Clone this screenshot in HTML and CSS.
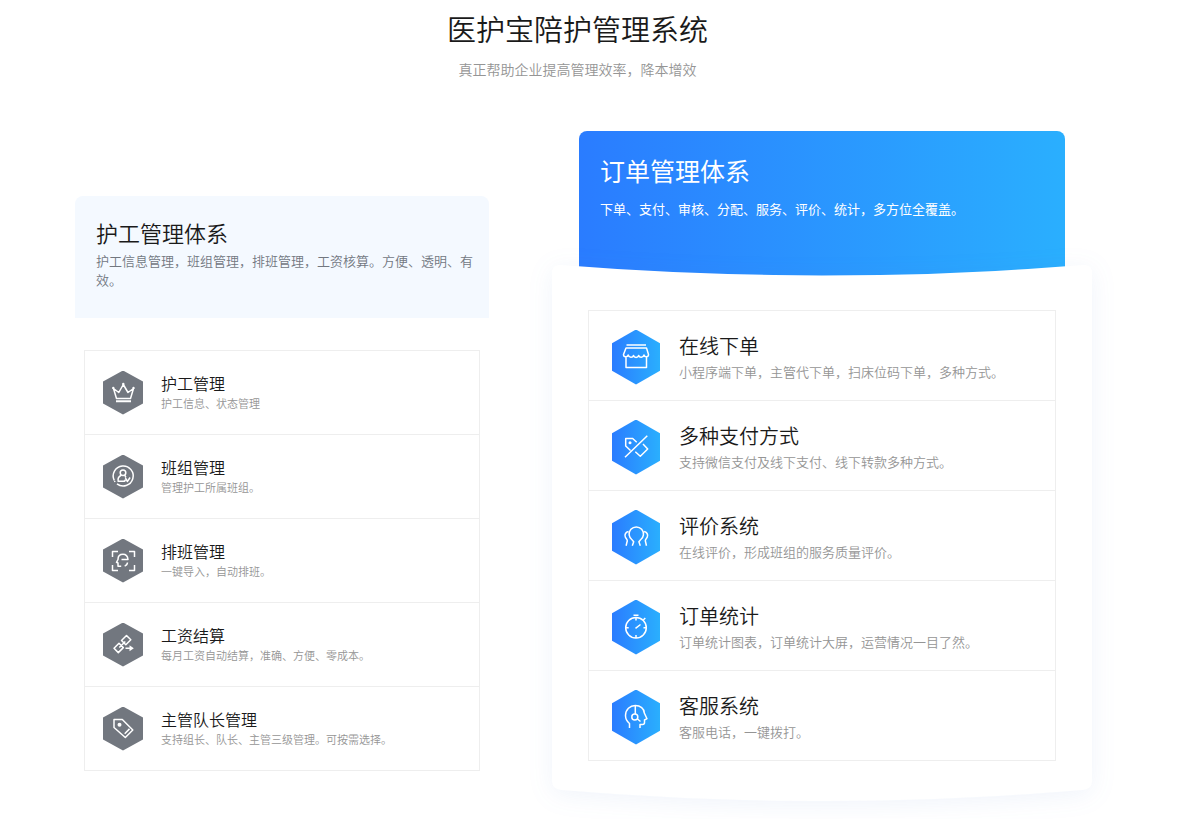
FILE: index.html
```html
<!DOCTYPE html>
<html lang="zh-CN">
<head>
    <meta charset="UTF-8">
    <meta name="viewport" content="width=device-width, initial-scale=1.0">
    <title>医护宝陪护管理系统</title>
    <link rel="stylesheet" href="styles.css">
</head>
<body>
    <main class="section">
        <header class="section-header">
            <h1>医护宝陪护管理系统</h1>
            <p>真正帮助企业提高管理效率，降本增效</p>
        </header>

        <div class="columns">
            <!-- 护工管理体系 -->
            <section class="panel panel-worker">
                <div class="panel-head">
                    <h2>护工管理体系</h2>
                    <p>护工信息管理，班组管理，排班管理，工资核算。方便、透明、有效。</p>
                </div>
                <ul class="feature-list">
                    <li class="feature">
                        <span class="hex">
                            <svg viewBox="0 0 40 44" aria-hidden="true">
                                <path d="M10.5 17.5l3 10h14l3-10-5.5 4-4.700-8-4.500 8z"/>
                                <path class="thick" d="M13 30.200h15"/>
                                <g class="solid"><circle cx="10.300" cy="17" r="1.200"/><circle cx="20.300" cy="13" r="1.200"/><circle cx="30.500" cy="17" r="1.200"/></g>
                            </svg>
                        </span>
                        <div class="feature-text">
                            <h3>护工管理</h3>
                            <p>护工信息、状态管理</p>
                        </div>
                    </li>
                    <li class="feature">
                        <span class="hex">
                            <svg viewBox="0 0 40 44" aria-hidden="true">
                                <path d="M11.300 25.500A10 10 0 1 1 14 28.800M12 27l-.5-1"/>
                                <circle cx="20" cy="17.800" r="2.800"/>
                                <path d="M18.200 20.300c-2.500 1.200-3.500 3.500-3 6h5.300c1 0 1.800-.8 1.800-1.800M21.500 20.300l1.500 1.700M22.300 22.500l2 4 2.800-4"/>
                            </svg>
                        </span>
                        <div class="feature-text">
                            <h3>班组管理</h3>
                            <p>管理护工所属班组。</p>
                        </div>
                    </li>
                    <li class="feature">
                        <span class="hex">
                            <svg viewBox="0 0 40 44" aria-hidden="true">
                                <path d="M9.500 18v-5.500H15M26 12.500h5.500V18M31.500 26v5.500H26M15 31.500H9.500V26"/>
                                <path d="M18.500 20.500h6.500c-.3-3-2.300-5.200-5-5.200-3.300 0-5 2.400-5 5.200l-1.500 2.800 1.500.7v3.300h3.200M24.500 23.500c-.2 1.800-1.200 3-2.800 3.500"/>
                            </svg>
                        </span>
                        <div class="feature-text">
                            <h3>排班管理</h3>
                            <p>一键导入，自动排班。</p>
                        </div>
                    </li>
                    <li class="feature">
                        <span class="hex">
                            <svg viewBox="0 0 40 44" aria-hidden="true">
                                <path d="M18.500 17.500l5-5 4.300 4.300-5 5zM11 25.300l5-5 4.300 4.300-5 5zM16.300 24.500l6-6M22.500 25.300H29"/>
                                <path class="solid" d="M26.500 22.300l4.300 3-4.300 3z"/>
                            </svg>
                        </span>
                        <div class="feature-text">
                            <h3>工资结算</h3>
                            <p>每月工资自动结算，准确、方便、零成本。</p>
                        </div>
                    </li>
                    <li class="feature">
                        <span class="hex">
                            <svg viewBox="0 0 40 44" aria-hidden="true">
                                <path d="M11 12.500h8.300L29.800 23l-7.500 7.500L11 20.500zM21.700 26.700l4.800-4.800"/>
                                <circle class="solid" cx="16.500" cy="17.700" r="2"/>
                            </svg>
                        </span>
                        <div class="feature-text">
                            <h3>主管队长管理</h3>
                            <p>支持组长、队长、主管三级管理。可按需选择。</p>
                        </div>
                    </li>
                </ul>
            </section>

            <!-- 订单管理体系 -->
            <section class="panel panel-order">
                <div class="panel-head">
                    <h2>订单管理体系</h2>
                    <p>下单、支付、审核、分配、服务、评价、统计，多方位全覆盖。</p>
                </div>
                <div class="card">
                    <svg class="card-shape" viewBox="0 0 540 537" preserveAspectRatio="none" aria-hidden="true">
                        <path d="M0 9Q0 0 9 1Q270 22 531 1Q540 0 540 9V517Q540 525 531 526Q270 548 9 526Q0 525 0 517Z"/>
                    </svg>
                    <ul class="feature-list">
                        <li class="feature">
                            <span class="hex">
                                <svg viewBox="0 0 48 55" aria-hidden="true">
                                    <path d="M14.500 15h19.500M14 18h20.500l2 6.500c0 3-4 3-4.500.5-.8 3-4.500 3-5.300.5-.8 2.500-4.500 2.500-5.200 0-.8 2.500-4.500 2.500-5.300-.5-.7 2.500-4.700 2.500-4.700-.5zM14 27.500v10h20.500v-10"/>
                                </svg>
                            </span>
                            <div class="feature-text">
                                <h3>在线下单</h3>
                                <p>小程序端下单，主管代下单，扫床位码下单，多种方式。</p>
                            </div>
                        </li>
                        <li class="feature">
                            <span class="hex">
                                <svg viewBox="0 0 48 55" aria-hidden="true">
                                    <path d="M18.500 30.500L13.700 26v-7.500h7l4 3.700M31 24l4.700 5-7.400 7.300-5-4.600M13 37.300L35.300 15.700"/>
                                    <circle class="solid" cx="18" cy="22.800" r="1.500"/>
                                </svg>
                            </span>
                            <div class="feature-text">
                                <h3>多种支付方式</h3>
                                <p>支持微信支付及线下支付、线下转款多种方式。</p>
                            </div>
                        </li>
                        <li class="feature">
                            <span class="hex">
                                <svg viewBox="0 0 48 55" aria-hidden="true">
                                    <path d="M20.300 35.700l1.400-4-1.500-1.700a7.200 7.200 0 1 1 8.200 0l-1.500 1.700 1.400 4"/>
                                    <path d="M16.500 21.500c-2.700.5-4.200 3-3.200 5.500.5 1.300 2 2.300 2 3.700l-1.200 5M32.100 21.500c2.700.5 4.200 3 3.200 5.500-.5 1.300-2 2.300-2 3.700l1.200 5"/>
                                </svg>
                            </span>
                            <div class="feature-text">
                                <h3>评价系统</h3>
                                <p>在线评价，形成班组的服务质量评价。</p>
                            </div>
                        </li>
                        <li class="feature">
                            <span class="hex">
                                <svg viewBox="0 0 48 55" aria-hidden="true">
                                    <circle cx="24" cy="27.700" r="10.300"/>
                                    <path d="M21.500 15.300h5M24 17.500v3M24 35v3M13.700 27.700h3M31.500 27.700h3M23.500 28.300l5-3.800M31.300 20l2-2"/>
                                </svg>
                            </span>
                            <div class="feature-text">
                                <h3>订单统计</h3>
                                <p>订单统计图表，订单统计大屏，运营情况一目了然。</p>
                            </div>
                        </li>
                        <li class="feature">
                            <span class="hex">
                                <svg viewBox="0 0 48 55" aria-hidden="true">
                                    <path d="M17.500 38v-4.500c-2.500-2-4-4.500-4-8 0-6 4.500-10 9.800-10 5 0 9 3 9 7.500l2.700 5.700-2.500 1.300v2.500c0 1.500-.8 2-2 2H28V38"/>
                                    <path d="M23.300 15.500v8.500M25.500 29l3 2.500"/>
                                    <circle cx="22.800" cy="27" r="3"/>
                                </svg>
                            </span>
                            <div class="feature-text">
                                <h3>客服系统</h3>
                                <p>客服电话，一键拨打。</p>
                            </div>
                        </li>
                    </ul>
                </div>
            </section>
        </div>
    </main>
</body>
</html>
```
FILE: styles.css
```css
:root {
    --text-primary: #1a1a1a;
    --text-secondary: #959595;
    --border-color: #eeeeee;
    --gray: #72777f;
    --blue-gradient: linear-gradient(90deg, #2a7cff, #2aaffe);
}

* {
    margin: 0;
    padding: 0;
    box-sizing: border-box;
}

body {
    font-family: "Microsoft YaHei Light", "Noto Sans CJK SC", sans-serif;
    font-weight: 350;
    background-color: #ffffff;
    color: var(--text-primary);
}

h1,
h2,
h3 {
    font-weight: 350;
}

.section {
    padding: 8px 88px 18px 75px;
}

.section-header {
    padding-right: 12px;
    margin-bottom: 52px;
    text-align: center;
}

.section-header h1 {
    font-size: 29px;
    line-height: 40px;
}

.section-header p {
    margin-top: 11px;
    font-size: 14px;
    line-height: 20px;
    color: var(--text-secondary);
}

.columns {
    display: grid;
    grid-template-columns: 414fr 540fr;
    column-gap: 63px;
    align-items: start;
}

.feature-list {
    list-style: none;
    border: 1px solid var(--border-color);
    border-top: none;
}

.feature {
    display: flex;
    align-items: center;
    border-top: 1px solid var(--border-color);
}

.feature p {
    color: var(--text-secondary);
}

.hex {
    flex: none;
    clip-path: polygon(50% 0, 100% 25%, 100% 75%, 50% 100%, 0 75%, 0 25%);
}

.hex svg {
    display: block;
    fill: none;
    stroke: #ffffff;
    stroke-width: 1.5;
    stroke-linejoin: round;
}

.hex .thick {
    stroke-width: 2;
}

.hex .solid {
    fill: #ffffff;
    stroke: none;
}

/* 左侧 */
.panel-worker {
    margin-top: 65px;
}

.panel-worker .panel-head {
    padding: 21px 12px 29px 21px;
    background-color: #f4f9ff;
    border-radius: 8px 8px 0 0;
}

.panel-worker h2 {
    font-size: 22px;
    line-height: 30px;
}

.panel-worker .panel-head p {
    margin-top: 4px;
    font-size: 13px;
    line-height: 19px;
    color: #72777f;
}

.panel-worker .feature-list {
    margin: 32px 9px 0;
}

.panel-worker .feature {
    gap: 18px;
    min-height: 84px;
    padding: 0 18px;
}

.panel-worker .hex {
    width: 40px;
    background-color: var(--gray);
}

.panel-worker .feature-text {
    padding-bottom: 1px;
}

.panel-worker h3 {
    font-size: 16px;
    line-height: 23px;
}

.panel-worker .feature p {
    font-size: 11px;
    line-height: 17px;
}

/* 右侧 */
.panel-order .panel-head {
    margin: 0 27px;
    padding: 21px 21px 57px;
    background: var(--blue-gradient);
    border-radius: 8px 8px 0 0;
    color: #ffffff;
}

.panel-order h2 {
    font-size: 25px;
    font-weight: 400;
    line-height: 36px;
}

.panel-order .panel-head p {
    margin-top: 11px;
    font-size: 13px;
    font-weight: 400;
    line-height: 20px;
}

.card {
    position: relative;
    margin-top: -12px;
    padding: 46px 36px 40px;
}

.card-shape {
    position: absolute;
    inset: 0;
    width: 100%;
    height: 100%;
    overflow: visible;
    fill: #ffffff;
    filter: drop-shadow(0 4px 12px rgba(60, 110, 210, 0.08));
}

.card .feature-list {
    position: relative;
}

.panel-order .feature {
    gap: 19px;
    min-height: 90px;
    padding: 3px 23px 0;
}

.panel-order .hex {
    width: 48px;
    background: var(--blue-gradient);
}

.panel-order .feature-text {
    padding-bottom: 5px;
}

.panel-order .panel-head h2 {
    font-weight: 400;
}

.panel-order h3 {
    font-size: 20px;
    line-height: 34px;
}

.panel-order .feature p {
    font-size: 13px;
    line-height: 18px;
}

@media (max-width: 900px) {
    .section {
        padding: 8px 20px 18px;
    }

    .section-header {
        padding-right: 0;
    }

    .columns {
        grid-template-columns: 1fr;
        row-gap: 40px;
    }

    .panel-worker {
        margin-top: 0;
    }
}
```
